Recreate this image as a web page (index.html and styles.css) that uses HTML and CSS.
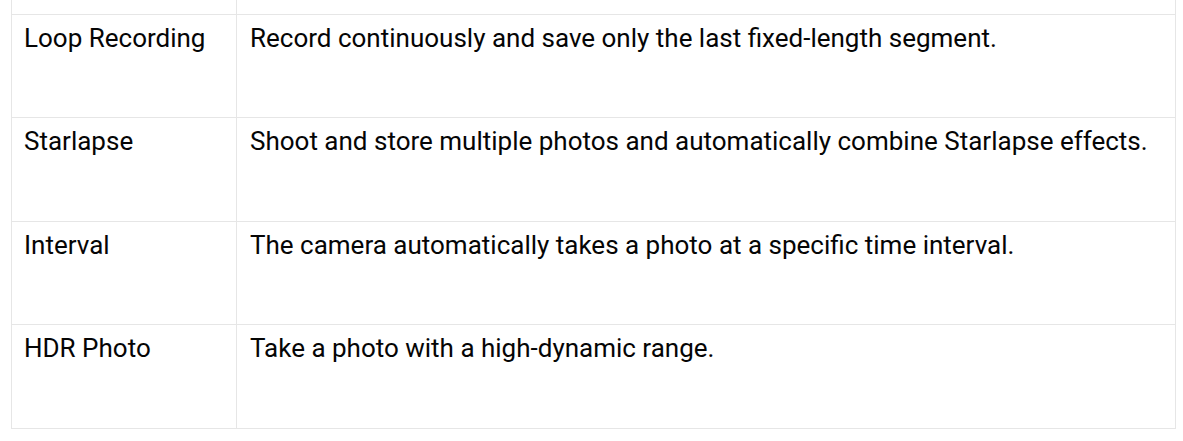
FILE: index.html
```html
<!DOCTYPE html>
<html>
<head>
<meta charset="utf-8">
<link rel="stylesheet" href="styles.css">
</head>
<body>
<table class="modes">
  <tr class="cut"><td class="name"></td><td class="desc"></td></tr>
  <tr class="row"><td class="name">Loop Recording</td><td class="desc">Record continuously and save only the last fixed-length segment.</td></tr>
  <tr class="row"><td class="name">Starlapse</td><td class="desc">Shoot and store multiple photos and automatically combine Starlapse effects.</td></tr>
  <tr class="row"><td class="name">Interval</td><td class="desc">The camera automatically takes a photo at a specific time interval.</td></tr>
  <tr class="row"><td class="name">HDR Photo</td><td class="desc">Take a photo with a high-dynamic range.</td></tr>
</table>
</body>
</html>
```

FILE: styles.css
```css
html, body {
  margin: 0;
  padding: 0;
  background: #ffffff;
}
body {
  padding-left: 11px;
  font-family: Roboto, "Liberation Sans", sans-serif;
  color: #050505;
}
.modes {
  border-collapse: collapse;
  width: 1165px;
  table-layout: fixed;
}
.modes td {
  border: 1px solid #e6e6e6;
  vertical-align: top;
  padding: 8px 12px;
  font-size: 26px;
  line-height: 30px;
  box-sizing: border-box;
}
.modes .name {
  width: 225px;
}
.modes .desc {
  padding-left: 13px;
}
.cut td {
  height: 14px;
  padding: 0;
  border-top: none;
}
.row td {
  height: 103.5px;
}
```
